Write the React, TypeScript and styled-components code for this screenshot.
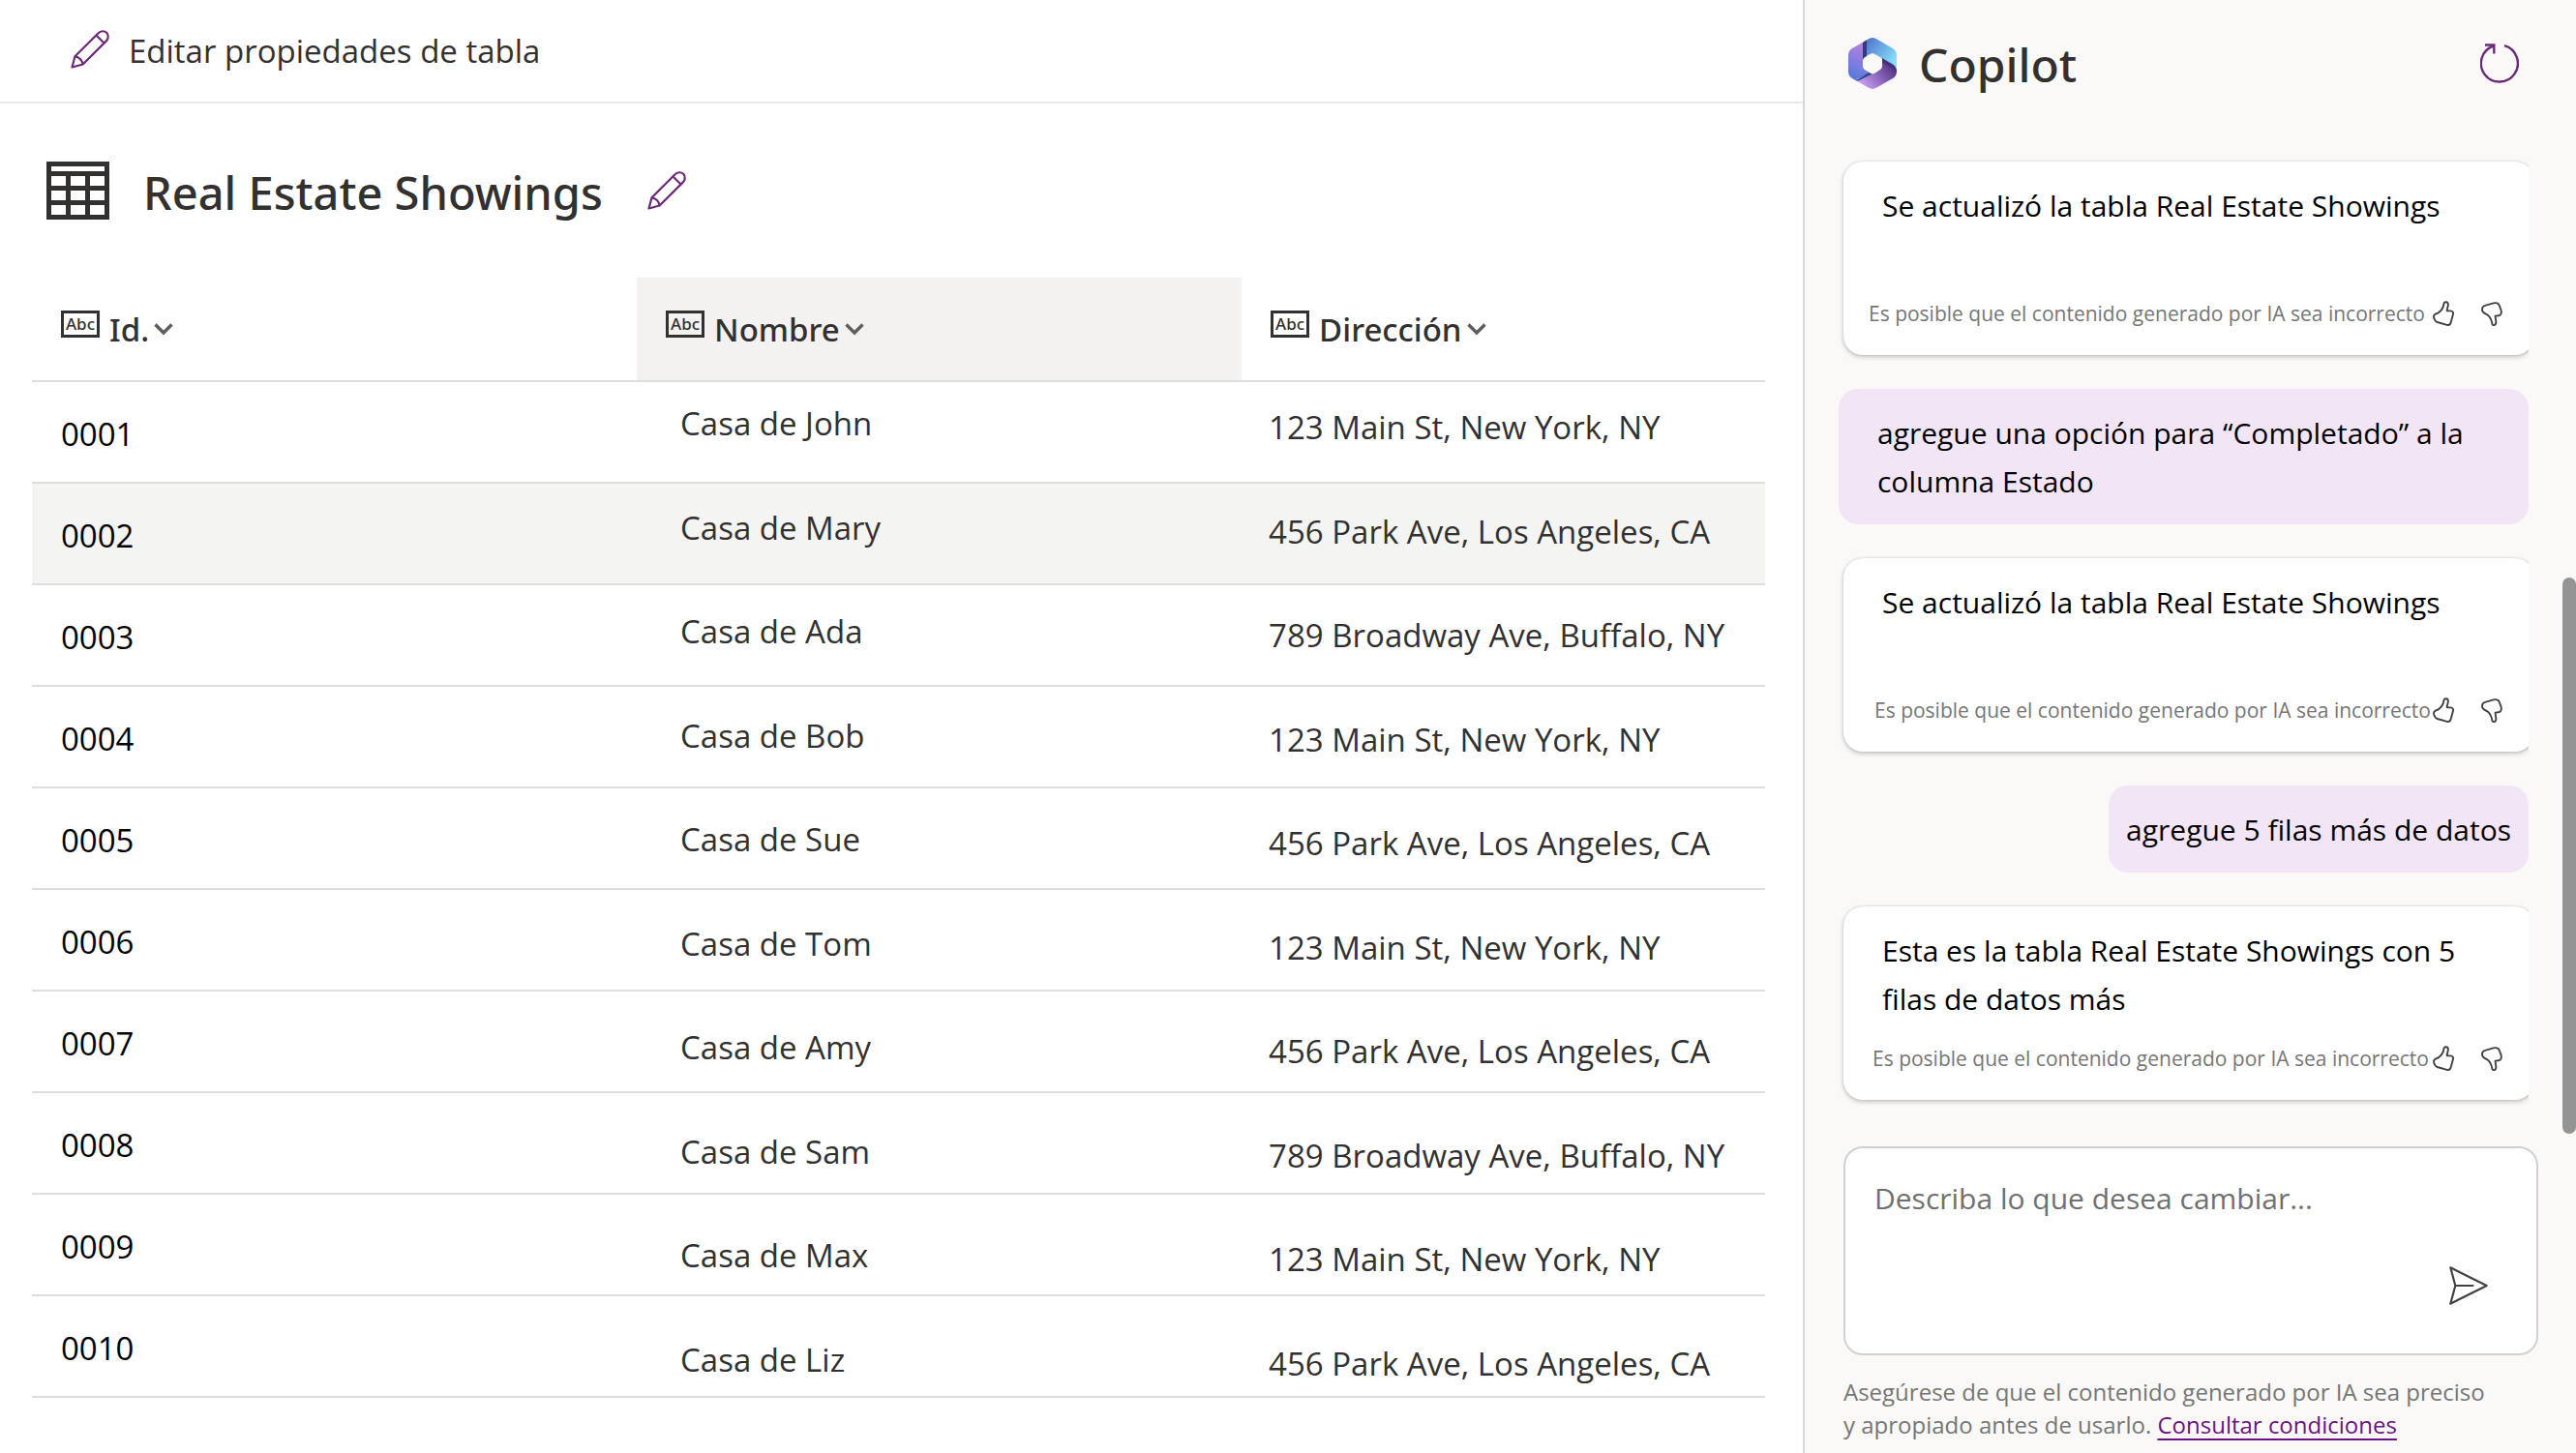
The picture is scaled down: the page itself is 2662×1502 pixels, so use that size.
import React from 'react';
import styled, { createGlobalStyle } from 'styled-components';

const GlobalStyle = createGlobalStyle`
  *, *::before, *::after { box-sizing: border-box; }
  body {
    margin: 0;
    background: #ffffff;
    color: #323130;
    font-family: "Open Sans", "Noto Sans", sans-serif;
  }
  button, textarea { font: inherit; color: inherit; }
`;

const brand = '#6b2a78';
const headingFont = '"Noto Sans", "Open Sans", sans-serif';

const Page = styled.div`
  display: grid;
  grid-template-columns: minmax(0, 1fr) 799px;
  min-height: 100vh;
`;

const Main = styled.main`
  background: #ffffff;
`;

const Toolbar = styled.header`
  display: flex;
  align-items: center;
  height: 107px;
  padding: 0 73px;
  border-bottom: 2px solid #eaeaea;
`;

const PlainButton = styled.button`
  display: inline-flex;
  align-items: center;
  padding: 0;
  border: 0;
  background: none;
  cursor: pointer;
`;

const ToolbarButton = styled(PlainButton)`
  gap: 20px;
  font-size: 33px;
  line-height: 44px;
`;

const TitleBar = styled.div`
  display: flex;
  align-items: flex-start;
  padding: 60px 48px 56px;
`;

const Title = styled.h1`
  margin: 0 46px 0 35px;
  font-family: ${headingFont};
  font-size: 47px;
  font-weight: 500;
  line-height: 64px;
`;

const TitleEdit = styled(PlainButton)`
  height: 64px;
`;

const TableArea = styled.div`
  padding: 0 39px 0 33px;
`;

const Table = styled.table`
  width: 100%;
  table-layout: fixed;
  border-collapse: separate;
  border-spacing: 0;
`;

const HeadCell = styled.th<{ $active?: boolean; $width: string }>`
  width: ${(p) => p.$width};
  height: 108px;
  padding: 2px 30px 0;
  border-bottom: 2px solid #dededc;
  background: ${(p) => (p.$active ? '#f3f2f1' : 'transparent')};
  background-clip: padding-box;
  text-align: left;
`;

const HeadButton = styled(PlainButton)`
  gap: 5px;
  font-family: ${headingFont};
  font-size: 33px;
  font-weight: 500;
  line-height: 48px;
  vertical-align: middle;
`;

const TypeBadge = styled.span`
  width: 40px;
  height: 28px;
  margin: 0 5px 12px 0;
  border: 3px solid #323130;
  font-size: 17px;
  line-height: 22px;
  text-align: center;
`;

const Row = styled.tr<{ $selected?: boolean }>`
  background: ${(p) => (p.$selected ? '#f4f4f2' : 'transparent')};
`;

const Cell = styled.td<{ $top: number; $left: number; $dark?: boolean }>`
  height: 105px;
  padding: ${(p) => p.$top}px 0 0 ${(p) => p.$left}px;
  border-bottom: 2px solid #dededc;
  color: ${(p) => (p.$dark ? '#000000' : '#323130')};
  font-size: 33px;
  line-height: 48px;
  vertical-align: top;
  white-space: nowrap;
`;

const Sidebar = styled.aside`
  position: relative;
  display: flex;
  flex-direction: column;
  border-left: 2px solid #d8d8d8;
  background: #faf9f8;
`;

const SidebarHeader = styled.header`
  display: flex;
  align-items: center;
  gap: 23px;
  height: 130px;
  padding: 0 59px 0 45px;
`;

const SidebarTitle = styled.h2`
  flex: 1;
  margin: 0;
  padding-top: 4px;
  font-family: ${headingFont};
  font-size: 48px;
  font-weight: 500;
  line-height: 64px;
`;

const Messages = styled.div`
  display: flex;
  flex-direction: column;
  gap: 35px;
  margin-right: 49px;
  padding: 37px 0 20px 35px;
  overflow: hidden;
  color: #000000;
  font-size: 30px;
  line-height: 50px;
`;

const Reply = styled.article`
  display: flex;
  flex-direction: column;
  justify-content: space-between;
  min-height: 200px;
  margin: 0 -6px 0 5px;
  padding: 21px 33px 29px 0;
  border-radius: 20px;
  background: #ffffff;
  box-shadow: 0 2px 5px rgba(0, 0, 0, 0.22), 0 0 2px rgba(0, 0, 0, 0.16);
`;

const ReplyText = styled.p`
  margin: 0;
  padding-left: 40px;
`;

const ReplyFooter = styled.footer<{ $indent: number }>`
  display: flex;
  align-items: center;
  height: 28px;
  padding-left: ${(p) => p.$indent}px;
`;

const Note = styled.span`
  flex: 1;
  color: #767676;
  font-size: 21px;
  line-height: 28px;
  white-space: nowrap;
`;

const Votes = styled.div`
  display: flex;
  gap: 28px;
`;

const Request = styled.p<{ $short?: boolean }>`
  align-self: ${(p) => (p.$short ? 'flex-end' : 'stretch')};
  margin: 0;
  padding: 21px ${(p) => (p.$short ? 18 : 40)}px 19px;
  border-radius: 20px;
  background: #f2e6f6;
`;

const Composer = styled.form`
  display: flex;
  flex-direction: column;
  height: 216px;
  margin: 28px 39px 0 40px;
  padding: 32px 50px 50px 30px;
  border: 2px solid #d1d1d1;
  border-radius: 20px;
  background: #ffffff;
`;

const Prompt = styled.textarea`
  flex: 1;
  min-height: 0;
  padding: 0;
  border: 0;
  outline: 0;
  resize: none;
  overflow: hidden;
  background: transparent;
  font-size: 30px;
  line-height: 40px;
  &::placeholder { color: #707070; opacity: 1; }
`;

const SendButton = styled(PlainButton)`
  align-self: flex-end;
`;

const Disclaimer = styled.p`
  margin: 21px 80px 0 40px;
  color: #767676;
  font-size: 24px;
  line-height: 34px;
`;

const TermsLink = styled.a`
  color: #6b1480;
  text-decoration: underline;
  text-decoration-thickness: 2px;
  text-underline-offset: 5px;
`;

const ScrollThumb = styled.div`
  position: absolute;
  top: calc(40% - 4px);
  right: 0;
  width: 14px;
  height: calc(38% + 4px);
  border-radius: 7px;
  background: #949494;
`;

const Pencil = () => (
  <svg width="40" height="44" viewBox="0 0 40 44" fill="none" stroke={brand} strokeWidth="2.2" strokeLinejoin="round" aria-hidden="true">
    <path d="M1.5 38.5L4.5 27.3L28.6 3.2C31 .8 34.8 .6 37.2 2.8C39.4 5.2 39.2 9 36.8 11.4L12.6 35.5Z" />
    <path d="M26.5 5.5L34.5 13.5M4.5 27.3C8.5 27.6 12.3 31.4 12.6 35.5" />
  </svg>
);

const TableIcon = () => (
  <svg width="65" height="60" viewBox="0 0 65 60" aria-hidden="true">
    <path
      fill="#323130"
      fillRule="evenodd"
      d="M0 0H65V60H0ZM5 5V10H60V5ZM5 15V25H20V15ZM25 15V25H40V15ZM45 15V25H60V15ZM5 30V40H20V30ZM25 30V40H40V30ZM45 30V40H60V30ZM5 45V55H20V45ZM25 45V55H40V45ZM45 45V55H60V45Z"
    />
  </svg>
);

const Chevron = () => (
  <svg width="20" height="14" viewBox="0 0 20 14" fill="none" stroke="#605e5c" strokeWidth="3.4" aria-hidden="true">
    <path d="M1.5 1.5L10 10L18.5 1.5" />
  </svg>
);

const Refresh = () => (
  <svg width="40" height="41" viewBox="0 0 40 41" fill="none" stroke={brand} strokeWidth="2.4" aria-hidden="true">
    <path d="M25 2.2A19 19 0 1 1 13.5 2.6M5 1.5H14.3V10.5" />
  </svg>
);

const ThumbUp = () => (
  <svg width="22" height="26" viewBox="0 0 22 26" fill="none" stroke="#424242" strokeWidth="1.9" strokeLinejoin="round" aria-hidden="true">
    <path d="M11.5 3C11.8 .6 15.8 .4 15.9 3.6C15.9 6 14.8 8 14.6 10.2L18.3 10.4C20.5 10.6 21.5 12 21 13.8L18.6 22.5C18 24.6 16.6 25.3 14.6 24.8L4.6 22C2.8 21.4 1 18.4 1 16.2C1 13.6 3.6 13.6 5.6 12.4C8.4 10.6 11 6.6 11.5 3Z" />
  </svg>
);

const ThumbDown = () => (
  <svg width="22" height="26" viewBox="0 0 22 26" fill="none" stroke="#424242" strokeWidth="1.9" strokeLinejoin="round" aria-hidden="true">
    <path d="M1 9.4C.9 7 1.6 5.4 4 4.8L12.6 2.4C15.4 1.7 18 2.6 18.8 4.8L20.4 9.2C21.4 12 20.6 15.2 18 15.3L14.6 15.6C14.6 18.4 15.6 20.4 15.3 22.8C14.9 25.8 11.8 26 11.2 23.2C10.6 19.6 9.4 16.6 6.6 14.6C4.2 12.9 1.2 12.4 1 9.4Z" />
  </svg>
);

const Send = () => (
  <svg width="40" height="40" viewBox="0 0 40 40" fill="none" stroke="#424242" strokeWidth="2.2" strokeLinejoin="round" strokeLinecap="round" aria-hidden="true">
    <path d="M1.3 1.3L38.7 20L1.3 38.7L6.3 20ZM6.3 20H24.5" />
  </svg>
);

const Logo = () => (
  <svg width="50" height="53" viewBox="0 0 50 53" aria-hidden="true">
    <defs>
      <clipPath id="logo-hex">
        <path d="M21 1.2Q25 -1 29 1.2L46 11Q50 13.5 50 18V35Q50 39.5 46 42L29 51.8Q25 54 21 51.8L4 42Q0 39.5 0 35V18Q0 13.5 4 11Z" />
      </clipPath>
      <linearGradient id="logo-left" x1=".6" y1="0" x2=".3" y2="1">
        <stop offset=".15" stopColor="#b580de" />
        <stop offset=".9" stopColor="#5a7bdc" />
      </linearGradient>
      <linearGradient id="logo-top" x1="0" y1=".1" x2="1" y2=".9">
        <stop offset="0" stopColor="#5377cc" />
        <stop offset=".9" stopColor="#86e2fb" />
      </linearGradient>
      <linearGradient id="logo-bottom" x1=".15" y1=".7" x2="1" y2=".25">
        <stop offset="0" stopColor="#c79cf4" />
        <stop offset=".95" stopColor="#523384" />
      </linearGradient>
    </defs>
    <g clipPath="url(#logo-hex)">
      <path fill="url(#logo-left)" d="M0 0H19L16 8V32L24 37L8 46H0Z" />
      <path fill="url(#logo-bottom)" d="M35 24L50 33V54H8L5 44L24 37Z" />
      <path fill="url(#logo-top)" d="M19 0H50V32L35 22L25 16L19 19Z" />
      <path fill="#343a80" d="M15 5.5Q15.5 3.5 19 1.8V20L15 22Z" />
      <path fill="#47307a" d="M35 21L46 27.5Q49.5 30 50 34L35 25.5Z" />
      <path fill="#2c4a8f" d="M5 43.5Q9 44 11 42.5L21 36L25 37.3L12 43.8Q8 45.5 5 43.5Z" />
    </g>
    <path
      fill="#faf9f8"
      d="M22 17.2Q25 15.8 28 17.2L33 20.2Q35 21.6 35 24V29.5Q35 31.6 33 33L28 36.2L25 37.6L22 36L17 33Q15 31.6 15 29.5V24Q15 21.6 17 20.2Z"
    />
  </svg>
);

const streets = ['123 Main St, New York, NY', '456 Park Ave, Los Angeles, CA', '789 Broadway Ave, Buffalo, NY'];

const showings = [
  { id: '0001', name: 'Casa de John', address: streets[0] },
  { id: '0002', name: 'Casa de Mary', address: streets[1] },
  { id: '0003', name: 'Casa de Ada', address: streets[2] },
  { id: '0004', name: 'Casa de Bob', address: streets[0] },
  { id: '0005', name: 'Casa de Sue', address: streets[1] },
  { id: '0006', name: 'Casa de Tom', address: streets[0] },
  { id: '0007', name: 'Casa de Amy', address: streets[1] },
  { id: '0008', name: 'Casa de Sam', address: streets[2] },
  { id: '0009', name: 'Casa de Max', address: streets[0] },
  { id: '0010', name: 'Casa de Liz', address: streets[1] },
];

const columns = [
  { label: 'Id.', width: '34.9%' },
  { label: 'Nombre', width: '34.9%', active: true },
  { label: 'Dirección', width: '30.2%' },
];

// Name and address text runs on a slightly taller rhythm than the rows.
const drift = (index: number) => Math.round(index * 2.5);

function BotReply({ text, indent }: { text: string; indent: number }) {
  return (
    <Reply>
      <ReplyText>{text}</ReplyText>
      <ReplyFooter $indent={indent}>
        <Note>Es posible que el contenido generado por IA sea incorrecto</Note>
        <Votes>
          <PlainButton type="button" aria-label="Me gusta"><ThumbUp /></PlainButton>
          <PlainButton type="button" aria-label="No me gusta"><ThumbDown /></PlainButton>
        </Votes>
      </ReplyFooter>
    </Reply>
  );
}

export default function App() {
  return (
    <>
      <GlobalStyle />
      <Page>
        <Main>
          <Toolbar>
            <ToolbarButton type="button">
              <Pencil />
              Editar propiedades de tabla
            </ToolbarButton>
          </Toolbar>
          <TitleBar>
            <TableIcon />
            <Title>Real Estate Showings</Title>
            <TitleEdit type="button" aria-label="Editar nombre"><Pencil /></TitleEdit>
          </TitleBar>
          <TableArea>
            <Table>
              <thead>
                <tr>
                  {columns.map((c) => (
                    <HeadCell key={c.label} scope="col" $width={c.width} $active={c.active}>
                      <HeadButton type="button">
                        <TypeBadge>Abc</TypeBadge>
                        {c.label}
                        <Chevron />
                      </HeadButton>
                    </HeadCell>
                  ))}
                </tr>
              </thead>
              <tbody>
                {showings.map((s, i) => (
                  <Row key={s.id} $selected={s.id === '0002'}>
                    <Cell $top={30} $left={30} $dark>{s.id}</Cell>
                    <Cell $top={19 + drift(i)} $left={45}>{s.name}</Cell>
                    <Cell $top={23 + drift(i)} $left={28}>{s.address}</Cell>
                  </Row>
                ))}
              </tbody>
            </Table>
          </TableArea>
        </Main>
        <Sidebar>
          <SidebarHeader>
            <Logo />
            <SidebarTitle>Copilot</SidebarTitle>
            <PlainButton type="button" aria-label="Reiniciar"><Refresh /></PlainButton>
          </SidebarHeader>
          <Messages>
            <BotReply text="Se actualizó la tabla Real Estate Showings" indent={26} />
            <Request>agregue una opción para “Completado” a la columna Estado</Request>
            <BotReply text="Se actualizó la tabla Real Estate Showings" indent={32} />
            <Request $short>agregue 5 filas más de datos</Request>
            <BotReply text="Esta es la tabla Real Estate Showings con 5 filas de datos más" indent={30} />
          </Messages>
          <Composer>
            <Prompt aria-label="Mensaje para Copilot" placeholder="Describa lo que desea cambiar..." />
            <SendButton type="submit" aria-label="Enviar"><Send /></SendButton>
          </Composer>
          <Disclaimer>
            Asegúrese de que el contenido generado por IA sea preciso y apropiado antes de usarlo.{' '}
            <TermsLink href="#condiciones">Consultar condiciones</TermsLink>
          </Disclaimer>
          <ScrollThumb />
        </Sidebar>
      </Page>
    </>
  );
}
